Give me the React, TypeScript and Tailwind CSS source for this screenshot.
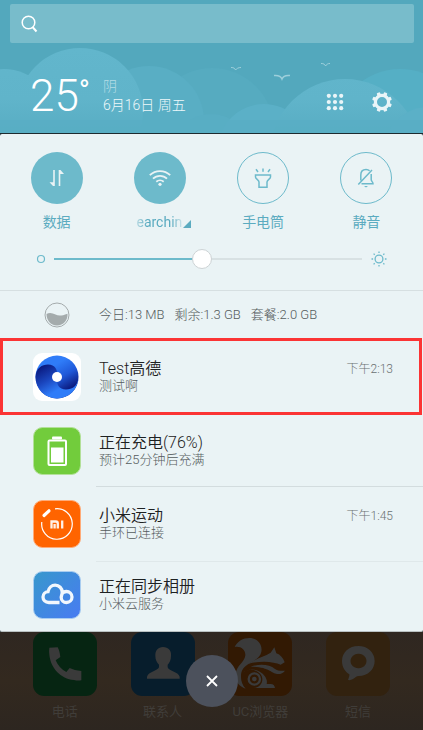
import type { ReactNode } from 'react'

function Scenery() {
  return (
    <svg
      className="absolute inset-0 h-full w-full"
      viewBox="0 0 423 133"
      preserveAspectRatio="none"
      aria-hidden="true"
    >
      <defs>
        <linearGradient id="cloud" gradientUnits="userSpaceOnUse" x1="0" y1="48" x2="0" y2="133">
          <stop offset="0" stopColor="#62b6cc" />
          <stop offset="0.6" stopColor="#60b4ca" />
          <stop offset="1" stopColor="#58adc3" />
        </linearGradient>
      </defs>
      <circle cx="212" cy="130" r="62" fill="#56abc0" />
      <circle cx="149" cy="121" r="55" fill="#59aec4" />
      <circle cx="400" cy="134" r="65" fill="#55afc5" />
      <circle cx="4" cy="120" r="51" fill="url(#cloud)" />
      <circle cx="80" cy="111" r="63" fill="url(#cloud)" />
      <circle cx="211" cy="154" r="40" fill="#58adc3" />
      <circle cx="264" cy="150" r="46" fill="#5bb0c7" />
      <circle cx="345" cy="154" r="75" fill="url(#cloud)" />
      <circle cx="428" cy="150" r="43" fill="#5bb0c7" />
      <rect y="120" width="423" height="13" fill="#59aec4" opacity="0.7" />
      <g fill="none" stroke="#9dcfdb" strokeWidth="1">
        <path d="M231 67.5c3 0 4 1 4.500 2.500 1-1.500 3-2.500 5.500-2.500" />
        <path d="M274 75.500c5-.5 7 1 8 3.500 1-2.500 4-4 8-3.500" strokeWidth="1.500" />
        <path d="M321 63.500c3 0 4 1 4.500 2.500 1-1.500 2-2.500 4.500-2.500" />
      </g>
    </svg>
  )
}

function Header() {
  return (
    <header className="relative h-[133px] bg-[#53a8bd] pl-[10px] pr-[9px] pt-1">
      <Scenery />
      <label className="relative flex h-[39px] items-center rounded-[2px] bg-[#78bccb] pl-[11px]">
        <svg className="h-[18px] w-[18px]" viewBox="0 0 18 18" fill="none" stroke="#fff" strokeWidth="1.5">
          <circle cx="7.500" cy="7.500" r="6.300" />
          <path d="M11.500 12l4 4.500" strokeWidth="2" />
        </svg>
        <input type="search" aria-label="搜索" className="min-w-0 flex-1 bg-transparent px-2 text-sm text-white outline-none" />
      </label>
      <div className="relative flex items-center pl-5 pr-[22px] pt-7">
        <p className="flex w-[62px] items-start whitespace-nowrap text-white">
          <span className="text-[44px] font-light leading-[50px]">25</span>
          <span className="text-[30px] leading-10">°</span>
        </p>
        <div className="ml-[11px] flex-1 text-sm leading-[19px]">
          <p className="font-light text-[#b4dde6]">阴</p>
          <p className="font-light text-[#eef8fa]">6月16日 周五</p>
        </div>
        <button type="button" aria-label="应用" className="mr-7 mt-3">
          <svg className="h-[18px] w-[18px]" viewBox="0 0 18 18" fill="#eaf5f8">
            {[2.8, 9, 15.2].map((y) =>
              [2.8, 9, 15.2].map((x) => <circle key={`${x}-${y}`} cx={x} cy={y} r="2.100" />),
            )}
          </svg>
        </button>
        <button type="button" aria-label="设置" className="mt-3">
          <svg className="h-5 w-5" viewBox="0 0 20 20">
            <circle cx="10" cy="10" r="6.600" fill="none" stroke="#eaf5f8" strokeWidth="3.200" />
            {[22.5, 67.5, 112.5, 157.5, 202.5, 247.5, 292.5, 337.5].map((a) => (
              <rect key={a} x="8.200" y="0" width="3.600" height="4" rx="1" fill="#eaf5f8" transform={`rotate(${a} 10 10)`} />
            ))}
          </svg>
        </button>
      </div>
    </header>
  )
}

function Toggle({ label, on, children }: { label: ReactNode; on?: boolean; children: ReactNode }) {
  return (
    <button type="button" aria-pressed={!!on} className="flex flex-col items-center gap-2 text-sm leading-5 text-[#5babc0]">
      <span
        className={
          on
            ? 'flex h-[52px] w-[52px] items-center justify-center rounded-full bg-[#6dbacb] text-[#eaf3f5]'
            : 'flex h-[52px] w-[52px] items-center justify-center rounded-full border border-[#6dbacb] text-[#6dbacb]'
        }
      >
        {children}
      </span>
      <span>{label}</span>
    </button>
  )
}

function QuickSettings() {
  return (
    <section className="border-b border-[#d6dfe1] pt-[18px]">
      <div className="grid grid-cols-4 px-[5px]">
        <Toggle label="数据" on>
          <svg className="h-6 w-6" viewBox="0 0 24 24" fill="currentColor">
            <path d="M8.200 4h1.600v16H8L4.500 16.200h3.700zM13.700 20V4h1.800l3.500 4h-3.700v12z" />
          </svg>
        </Toggle>
        <Toggle
          on
          label={
            <span className="flex items-end gap-px pl-2">
              <span className="[mask-image:linear-gradient(to_right,rgba(0,0,0,0.3),black_25%,black_75%,rgba(0,0,0,0.2))]">earchin</span>
              <svg className="mb-1 h-2 w-2" viewBox="0 0 8 8" fill="currentColor">
                <path d="M8 0v8H0z" />
              </svg>
            </span>
          }
        >
          <svg className="h-6 w-6" viewBox="0 0 24 24" fill="none" stroke="currentColor" strokeWidth="1.800">
            <path d="M1.800 9.200a14.600 14.600 0 0 1 20.400 0M5 12.700a10 10 0 0 1 14 0M8.300 15.800a5.600 5.600 0 0 1 7.400 0" />
            <circle cx="12" cy="18.300" r="1.600" fill="currentColor" stroke="none" />
          </svg>
        </Toggle>
        <Toggle label="手电筒">
          <svg className="h-6 w-6" viewBox="0 0 24 24" fill="none" stroke="currentColor" strokeWidth="1.500">
            <path d="M12 2.500v3.200M5 3.200l2 2.800M19 3.200L17 6M4.500 9h15v2c0 2-3.500 2.800-3.500 5v5.300H8V16c0-2.200-3.500-3-3.500-5z" />
          </svg>
        </Toggle>
        <Toggle label="静音">
          <svg className="h-6 w-6" viewBox="0 0 24 24" fill="none" stroke="currentColor" strokeWidth="1.500">
            <path d="M6.800 14.500V9c0-3.500 2-5.500 5.200-5.500 1.500 0 2.700.4 3.600 1.300M17.200 8v5.500c0 2 1.800 2.200 1.800 4.200H7.500M4.300 18.500L18 4" />
            <path d="M10 20h4l-2 1.500z" fill="currentColor" stroke="none" />
          </svg>
        </Toggle>
      </div>
      <div className="flex items-center px-9 pb-[21px] pt-[17px]">
        <svg className="mr-2 h-[10px] w-[10px]" viewBox="0 0 10 10" fill="none" stroke="#6dbacb" strokeWidth="1.200">
          <circle cx="5" cy="5" r="3.500" />
        </svg>
        <input
          type="range"
          aria-label="亮度"
          min={0}
          max={100}
          defaultValue={48}
          className="h-5 min-w-0 flex-1 appearance-none bg-[linear-gradient(to_right,#6dbacb_48%,#d8e1e3_48%)] bg-[length:100%_2px] bg-center bg-no-repeat [&::-webkit-slider-thumb]:h-5 [&::-webkit-slider-thumb]:w-5 [&::-webkit-slider-thumb]:appearance-none [&::-webkit-slider-thumb]:rounded-full [&::-webkit-slider-thumb]:border [&::-webkit-slider-thumb]:border-[#cdd3d5] [&::-webkit-slider-thumb]:bg-white"
        />
        <svg className="ml-[9px] h-4 w-4" viewBox="0 0 16 16" fill="none" stroke="#6dbacb" strokeWidth="1.300">
          <circle cx="8" cy="8" r="3.900" />
          <path d="M8 .5v1.600M8 13.900v1.600M.5 8h1.600M13.900 8h1.600M2.600 2.600l1.100 1.100M12.300 12.300l1.100 1.100M2.600 13.400l1.100-1.100M12.300 3.700l1.100-1.100" />
        </svg>
      </div>
    </section>
  )
}

function DataUsage() {
  return (
    <section className="flex h-[47px] items-center pl-11 text-[13px] font-light text-[#555c5d]">
      <svg className="mr-[29px] h-[26px] w-[26px]" viewBox="0 0 26 26">
        <circle cx="13" cy="13" r="12" fill="none" stroke="#a4abac" strokeWidth="1" />
        <path d="M2.500 12c3-2 6-1 9 .5s6 1.500 12-.8c.5 6.500-4 11.800-10.500 11.800S2.500 18 2.500 12z" fill="#a4abac" />
      </svg>
      <p className="flex gap-[10px]">
        <span>今日:13 MB</span>
        <span>剩余:1.3 GB</span>
        <span>套餐:2.0 GB</span>
      </p>
    </section>
  )
}

function AmapIcon() {
  return (
    <svg className="h-12 w-12" viewBox="0 0 48 48">
      <defs>
        <linearGradient id="swirlLow" gradientUnits="userSpaceOnUse" x1="9" y1="14" x2="23" y2="38">
          <stop offset="0" stopColor="#0b1c82" />
          <stop offset="0.5" stopColor="#1a45bd" />
          <stop offset="1" stopColor="#2f7cf8" />
        </linearGradient>
        <linearGradient id="swirlHigh" gradientUnits="userSpaceOnUse" x1="39" y1="34" x2="25" y2="10">
          <stop offset="0" stopColor="#0b1c82" />
          <stop offset="0.5" stopColor="#1f58d8" />
          <stop offset="1" stopColor="#2f7cf8" />
        </linearGradient>
      </defs>
      <rect width="48" height="48" rx="9" fill="#fff" />
      <circle cx="24" cy="24" r="21.500" fill="url(#swirlHigh)" />
      <path
        d="M2.500 24C3 15 9 11.500 15 11.500c7 0 10 5 9 12.500-1 7.500 2 12.500 9 12.500 6 0 12-3.500 12.500-12.500A21.500 21.500 0 0 1 2.500 24z"
        fill="url(#swirlLow)"
      />
      <circle cx="24" cy="24" r="5" fill="#fff" />
    </svg>
  )
}

function BatteryIcon() {
  return (
    <svg className="h-12 w-12" viewBox="0 0 48 48">
      <rect x="0.500" y="0.500" width="47" height="47" rx="9" fill="#72cc3c" stroke="#b3e099" />
      <rect x="19" y="9.500" width="10" height="3" rx="1" fill="#fff" />
      <rect x="15.500" y="13.500" width="17.500" height="24.500" rx="1" fill="none" stroke="#fff" strokeWidth="2" />
      <rect x="18" y="20.500" width="12.500" height="15" fill="#fff" />
    </svg>
  )
}

function MiFitIcon() {
  return (
    <svg className="h-12 w-12" viewBox="0 0 48 48">
      <rect x="0.500" y="0.500" width="47" height="47" rx="9" fill="#ff6400" stroke="#ffab78" />
      <path d="M22 8.800A15.300 15.300 0 1 1 8.800 22" fill="none" stroke="#fff" strokeWidth="1.200" />
      <path d="M11 15.500l5-4.700" stroke="#fff" strokeWidth="3.200" strokeLinecap="round" />
      <path d="M18.500 28.500v-7h4.300c1.400 0 2 .7 2 2v5M21.600 24v4.500M29.200 20.400v8.100" fill="none" stroke="#fff1e8" strokeWidth="2.300" />
    </svg>
  )
}

function MiCloudIcon() {
  return (
    <svg className="h-12 w-12" viewBox="0 0 48 48">
      <defs>
        <linearGradient id="micloud" x1="0" y1="0" x2="1" y2="1">
          <stop offset="0" stopColor="#3798cc" />
          <stop offset="1" stopColor="#497bf2" />
        </linearGradient>
      </defs>
      <rect x="0.500" y="0.500" width="47" height="47" rx="9" fill="url(#micloud)" stroke="#a9cdf0" />
      <path
        d="M26.500 31.500H15.800c-3.500 0-5.800-2.400-5.800-5.400 0-2.900 2.200-5.200 5-5.400.8-4 3.800-6.500 7.200-6.500 4 0 7 3.100 7 7 0 2.300-1 3.500-1 5.300 0 2.800 2.300 5 5.300 5 3 0 5.500-2.400 5.500-5.500s-2.500-5.500-5.500-5.500c-2 0-3.700.8-4.800 2.500"
        fill="none"
        stroke="#f2f7fd"
        strokeWidth="3.300"
      />
    </svg>
  )
}

type NoticeProps = { icon: ReactNode; title: string; text: string; time?: string }

function Notice({ icon, title, text, time }: NoticeProps) {
  return (
    <>
      {icon}
      <div className="ml-[18px] flex-1">
        <h2 className="text-base leading-[18px] text-[#1d2122]">{title}</h2>
        <p className="text-[13px] font-light leading-4 text-[#555c5d]">{text}</p>
      </div>
      {time && <time className="mb-4 text-xs font-light leading-4 text-[#6b7172]">{time}</time>}
    </>
  )
}

function Notifications() {
  return (
    <ul className="pb-1 font-[350]">
      <li className="mr-px flex h-[77px] items-center border-3 border-[#fb3434] pl-[30px] pr-[26px]">
        <Notice icon={<AmapIcon />} title="Test高德" text="测试啊" time="下午2:13" />
      </li>
      <li className="flex h-[71px] items-center pl-[33px] pr-[30px]">
        <Notice icon={<BatteryIcon />} title="正在充电(76%)" text="预计25分钟后充满" />
      </li>
      <li aria-hidden="true" className="ml-24 h-px bg-[#d3dcde]" />
      <li className="flex h-[74px] items-center pl-[33px] pr-[30px]">
        <Notice icon={<MiFitIcon />} title="小米运动" text="手环已连接" time="下午1:45" />
      </li>
      <li aria-hidden="true" className="ml-24 h-px bg-[#dfe8ea]" />
      <li className="flex h-[65px] items-center pl-[33px] pr-[30px]">
        <Notice icon={<MiCloudIcon />} title="正在同步相册" text="小米云服务" />
      </li>
    </ul>
  )
}

function DockApp({ label, tile, children }: { label: string; tile: string; children: ReactNode }) {
  return (
    <a href="#" className="flex flex-col items-center gap-[7px] text-[13px] leading-[18px] text-[#403d39]">
      <svg className="h-16 w-16" viewBox="0 0 192 192" fill="#3a3a3a">
        <rect width="192" height="192" rx="34" fill={tile} />
        {children}
      </svg>
      {label}
    </a>
  )
}

function Dock() {
  return (
    <footer className="relative grid min-h-[98px] flex-1 grid-cols-4 bg-[linear-gradient(to_bottom,#2f2721,#33291f_50%,#2d2620)] px-4">
      <DockApp label="电话" tile="#062512">
        <path d="M49 47l25-1c5 9 7 19 8 29l-14 10c6 15 17 27 32 35l10-12c10 5 21 8 35 9v28c-8 1-15 1-22-1-40-4-70-36-74-76-1-7-1-14 0-21z" />
      </DockApp>
      <DockApp label="联系人" tile="#071d2c">
        <path d="M96 45c16 0 26 11 24 27 0 12-4 19-10 26v8c2 10 32 14 36 28v6H48v-6c4-14 32-18 36-28v-8c-6-7-11-14-11-26-1-16 8-27 23-27z" />
      </DockApp>
      <DockApp label="UC浏览器" tile="#321903">
        <path d="M20 45c8-17 25-27 44-27 25 0 40 20 36 42-4 20-26 28-42 38-14 9-19 20-19 36 0 13 4 25 14 36-21-6-31-22-30-42 1-28 27-36 29-58 1-18-15-29-32-25z" />
        <path d="M62 95c18-14 44-20 66-33l11-16 6 18c12 4 21 14 25 27l-12 7c-20-8-52-14-96-3z" />
        <path d="M68 104c28-10 58-6 72 6 8 6 18 7 31 6-6 8-14 11-24 10-16-2-26-22-79-22z" />
        <path d="M44 122c24-18 54-8 66 10 6 9 8 16 6 24h12c8 0 12 5 13 12H78c16-2 25-12 25-27 0-22-34-38-59-19z" />
        <circle cx="79" cy="141" r="17" fill="none" stroke="#3a3a3a" strokeWidth="7" />
        <circle cx="79" cy="141" r="7" />
      </DockApp>
      <DockApp label="短信" tile="#32220f">
        <path
          fillRule="evenodd"
          d="M97 42c28 0 49 19 49 45 0 25-20 45-48 45-7 0-10 5-17 9-5 3-10 4-15 3 2-6 5-11 4-17-13-8-22-22-22-40 0-26 21-45 49-45zm0 23a24 22 0 1 0 1 0z"
        />
      </DockApp>
      <button
        type="button"
        aria-label="关闭"
        className="absolute left-1/2 top-[23px] flex h-[52px] w-[52px] -translate-x-1/2 items-center justify-center rounded-full bg-[#4c515c]"
      >
        <svg className="h-3 w-3" viewBox="0 0 12 12" stroke="#fff" strokeWidth="1.800">
          <path d="M1 1l10 10M11 1L1 11" />
        </svg>
      </button>
    </footer>
  )
}

export default function App() {
  return (
    <div className="flex min-h-screen flex-col bg-[#1d2b2f] font-[Roboto,'Noto_Sans_CJK_SC',sans-serif]">
      <Header />
      <main className="mt-px rounded-[2px] border-b border-[#b9c0c1] bg-[#eaf3f5]">
        <QuickSettings />
        <DataUsage />
        <Notifications />
      </main>
      <Dock />
    </div>
  )
}
